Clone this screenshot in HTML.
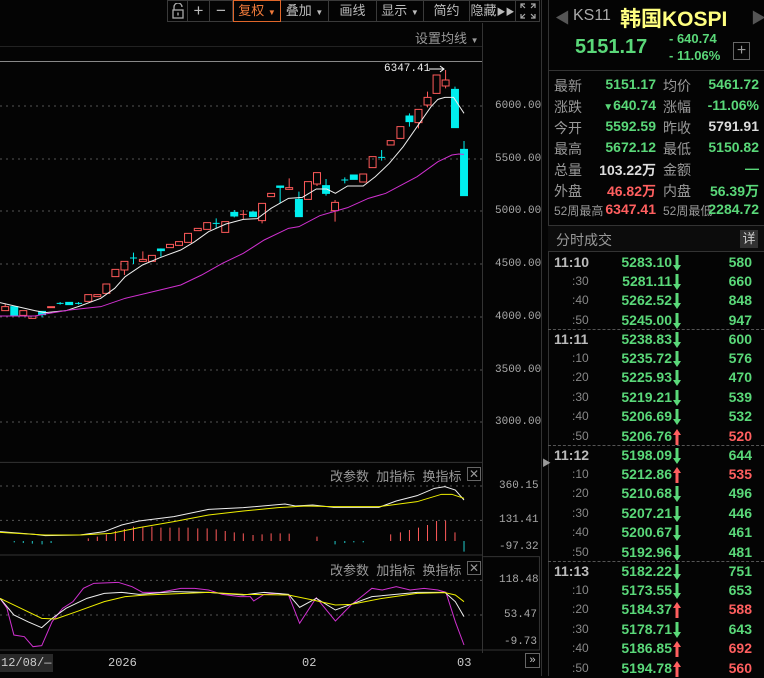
<!DOCTYPE html>
<html><head><meta charset="utf-8">
<style>
*{margin:0;padding:0;box-sizing:border-box}
body{width:764px;height:676px;background:#040404;overflow:hidden;position:relative;font-family:"Liberation Sans","Noto Sans CJK SC",sans-serif;color:#aaa}
.a{position:absolute;white-space:nowrap}
.tb{position:absolute;top:0;height:22px;border:1px solid #3a3a3a;border-left:none;color:#bbb;font-size:13px;line-height:20px;text-align:center}
.ax{position:absolute;font-family:"Liberation Mono",monospace;font-size:11px;color:#aaa;white-space:nowrap}
.g{color:#5ad879}.r{color:#ff5f5f}.w{color:#ddd}
.lbl{position:absolute;font-size:14px;color:#999;left:554px}
.val{position:absolute;font-size:14px;font-weight:bold;text-align:right;width:100px}
.row{position:absolute;left:548px;width:216px;height:19px;font-size:14px;font-weight:bold;line-height:19px}
.row .t{position:absolute;left:6px;color:#bbb}
.row .s{position:absolute;left:24px;color:#888;font-weight:normal;font-size:12px}
.row .p{position:absolute;right:92px}
.row .ar{position:absolute;left:125px;top:2px;width:8px;height:16px}
.row .v{position:absolute;right:12px}
.dash{position:absolute;left:548px;width:216px;border-top:1px dashed #555}
</style></head><body>
<svg width="0" height="0" style="position:absolute">
<defs>
<symbol id="dn" viewBox="0 0 8 16"><path d="M2.5 0H5.5V10H8L4 16L0 10H2.5Z" fill="#5ad879"/></symbol>
<symbol id="up" viewBox="0 0 8 16"><path d="M2.5 16H5.5V6H8L4 0L0 6H2.5Z" fill="#ff5f5f"/></symbol>
</defs></svg>

<!-- toolbar -->
<div class="tb" style="left:167px;width:21px;border-left:1px solid #3a3a3a">
<svg width="14" height="16" viewBox="0 0 14 16" style="margin-top:2px"><path d="M3 7V4a4 4 0 0 1 8 0" fill="none" stroke="#aaa" stroke-width="1.3"/><rect x="2" y="7" width="10" height="8" fill="none" stroke="#aaa" stroke-width="1.3"/><rect x="6.3" y="9.5" width="1.4" height="3" fill="#aaa"/></svg></div>
<div class="tb" style="left:188px;width:22px;font-size:17px">+</div>
<div class="tb" style="left:210px;width:23px;font-size:17px">−</div>
<div class="tb" style="left:233px;width:48px;border:1px solid #e0662a;color:#f07a3a">复权 <span style="font-size:8px">▼</span></div>
<div class="tb" style="left:281px;width:48px">叠加 <span style="font-size:8px">▼</span></div>
<div class="tb" style="left:329px;width:48px">画线</div>
<div class="tb" style="left:377px;width:47px">显示 <span style="font-size:8px">▼</span></div>
<div class="tb" style="left:424px;width:46px">简约</div>
<div class="tb" style="left:470px;width:46px">隐藏<span style="font-size:9px">▶▶</span></div>
<div class="tb" style="left:516px;width:24px">
<svg width="16" height="16" viewBox="0 0 16 16" style="margin-top:2px" fill="none" stroke="#aaa" stroke-width="1.2"><path d="M1 5V1h4M11 1h4v4M15 11v4h-4M5 15H1v-4M1 1l4 4M15 1l-4 4M15 15l-4-4M1 15l4-4"/></svg></div>

<div class="a" style="left:0;top:46px;width:482px;border-top:1px solid #222"></div>
<div class="a" style="left:0;top:61px;width:482px;border-top:1px solid #888"></div>
<div class="a" style="left:482px;top:23px;height:630px;border-left:1px solid #333"></div>
<div class="a" style="left:415px;top:28px;font-size:13px;color:#999">设置均线 <span style="font-size:8px">▼</span></div>
<div class="a" style="left:384px;top:63px;font-family:'Liberation Mono',monospace;font-size:11px;color:#eee">6347.41</div>
<svg class="a" style="left:428px;top:64px" width="18" height="10"><path d="M1 5H16M12 2l4 3-4 3" stroke="#fff" fill="none"/></svg>

<!-- main chart -->
<svg class="a" style="left:0;top:60px" width="545" height="400" viewBox="0 0 1568 1200" preserveAspectRatio="none">
<g stroke="#555" stroke-dasharray="2 4">
<path d="M0 138H1388M0 297H1388M0 453H1388M0 612H1388M0 771H1388M0 930H1388M0 1086H1388" vector-effect="non-scaling-stroke"/></g>
<g fill="none" stroke="#ff5a5a" stroke-width="1">
<rect x="5" y="740" width="20" height="12" vector-effect="non-scaling-stroke"/>
<rect x="57" y="752" width="20" height="14" vector-effect="non-scaling-stroke"/>
<rect x="83" y="768" width="20" height="7" vector-effect="non-scaling-stroke"/>
<rect x="137" y="740" width="20" height="3" vector-effect="non-scaling-stroke"/>
<rect x="244" y="704" width="20" height="20" vector-effect="non-scaling-stroke"/>
<rect x="270" y="704" width="20" height="6" vector-effect="non-scaling-stroke"/>
<rect x="296" y="672" width="20" height="28" vector-effect="non-scaling-stroke"/>
<rect x="322" y="628" width="20" height="22" vector-effect="non-scaling-stroke"/>
<rect x="348" y="604" width="20" height="26" vector-effect="non-scaling-stroke"/>
<rect x="401" y="598" width="20" height="6" vector-effect="non-scaling-stroke"/>
<rect x="427" y="586" width="20" height="18" vector-effect="non-scaling-stroke"/>
<rect x="479" y="553" width="20" height="10" vector-effect="non-scaling-stroke"/>
<rect x="505" y="545" width="20" height="11" vector-effect="non-scaling-stroke"/>
<rect x="531" y="520" width="20" height="27" vector-effect="non-scaling-stroke"/>
<rect x="559" y="505" width="20" height="7" vector-effect="non-scaling-stroke"/>
<rect x="586" y="488" width="20" height="20" vector-effect="non-scaling-stroke"/>
<rect x="638" y="485" width="20" height="32" vector-effect="non-scaling-stroke"/>
<rect x="744" y="430" width="20" height="52" vector-effect="non-scaling-stroke"/>
<rect x="770" y="400" width="20" height="10" vector-effect="non-scaling-stroke"/>
<rect x="822" y="383" width="20" height="5" vector-effect="non-scaling-stroke"/>
<rect x="876" y="365" width="20" height="53" vector-effect="non-scaling-stroke"/>
<rect x="902" y="338" width="20" height="34" vector-effect="non-scaling-stroke"/>
<rect x="954" y="427" width="20" height="25" vector-effect="non-scaling-stroke"/>
<rect x="1035" y="342" width="20" height="24" vector-effect="non-scaling-stroke"/>
<rect x="1062" y="290" width="20" height="33" vector-effect="non-scaling-stroke"/>
<rect x="1114" y="242" width="20" height="13" vector-effect="non-scaling-stroke"/>
<rect x="1142" y="200" width="20" height="35" vector-effect="non-scaling-stroke"/>
<rect x="1194" y="148" width="20" height="40" vector-effect="non-scaling-stroke"/>
<rect x="1220" y="112" width="20" height="23" vector-effect="non-scaling-stroke"/>
<rect x="1246" y="45" width="20" height="55" vector-effect="non-scaling-stroke"/>
<rect x="1272" y="60" width="20" height="18" vector-effect="non-scaling-stroke"/>
<path d="M15 730V740M358 630V645M411 574V598M700 450V478M690 463H710M754 482V490M832 355V383M912 372V378M964 420V427M964 452V485M1230 95V112M1230 135V142M1282 30V60M1282 78V85M1204 188V205" vector-effect="non-scaling-stroke"/>
</g>
<g fill="#00eeee" stroke="#00eeee">
<rect x="31" y="740" width="20" height="28" vector-effect="non-scaling-stroke"/>
<rect x="111" y="754" width="20" height="10" vector-effect="non-scaling-stroke"/>
<rect x="189" y="727" width="20" height="7" vector-effect="non-scaling-stroke"/>
<rect x="453" y="567" width="20" height="5" vector-effect="non-scaling-stroke"/>
<rect x="664" y="457" width="20" height="11" vector-effect="non-scaling-stroke"/>
<rect x="718" y="456" width="20" height="14" vector-effect="non-scaling-stroke"/>
<rect x="796" y="378" width="20" height="4" vector-effect="non-scaling-stroke"/>
<rect x="850" y="418" width="20" height="52" vector-effect="non-scaling-stroke"/>
<rect x="928" y="377" width="20" height="23" vector-effect="non-scaling-stroke"/>
<rect x="1008" y="345" width="20" height="13" vector-effect="non-scaling-stroke"/>
<rect x="1168" y="168" width="20" height="17" vector-effect="non-scaling-stroke"/>
<rect x="1299" y="88" width="20" height="115" vector-effect="non-scaling-stroke"/>
<rect x="1325" y="268" width="20" height="139" vector-effect="non-scaling-stroke"/>
<path fill="none" d="M121 764V772M163 730H183M173 726V734M216 730H236M226 726V734M374 594H394M384 578V612M463 565V590M612 490H632M622 475V505M674 450V472M806 382V430M860 395V418M938 357V377M938 400V407M982 360H1002M992 352V370M1088 292H1108M1098 270V302M1178 160V168M1178 185V200M1309 80V88M1335 243V268" vector-effect="non-scaling-stroke"/>
</g>
<polyline fill="none" stroke="#eee" vector-effect="non-scaling-stroke" points="0,728 100,752 130,758 190,752 230,738 290,715 330,685 360,650 410,615 460,593 520,570 560,545 600,515 650,492 700,478 740,476 780,445 830,415 870,412 910,387 940,387 965,400 1000,378 1045,378 1080,350 1120,310 1160,260 1200,200 1240,140 1260,118 1280,112 1305,112 1335,160"/>
<polyline fill="none" stroke="#d030d0" vector-effect="non-scaling-stroke" points="0,768 100,768 130,762 200,750 290,740 360,715 420,700 520,675 580,645 640,610 700,580 760,540 830,505 860,500 920,467 960,455 1000,443 1060,415 1110,400 1200,350 1260,305 1300,285 1320,282 1335,283"/>
</svg>
<div class="ax" style="left:495px;top:100px">6000.00</div>
<div class="ax" style="left:495px;top:153px">5500.00</div>
<div class="ax" style="left:495px;top:205px">5000.00</div>
<div class="ax" style="left:495px;top:258px">4500.00</div>
<div class="ax" style="left:495px;top:311px">4000.00</div>
<div class="ax" style="left:495px;top:364px">3500.00</div>
<div class="ax" style="left:495px;top:416px">3000.00</div>

<!-- lower panels -->
<svg class="a" style="left:0;top:455px" width="545" height="221" viewBox="0 0 1568 663" preserveAspectRatio="none">
<path d="M0 22H1388M0 300H1388M0 585H1388" stroke="#333" vector-effect="non-scaling-stroke"/>
<path d="M1390 305H1552V585H1390" stroke="#333" fill="none" vector-effect="non-scaling-stroke"/>
<path d="M0 93H1388M0 196H1388M0 376H1388M0 480H1388" stroke="#555" stroke-dasharray="2 4" vector-effect="non-scaling-stroke"/>
<path vector-effect="non-scaling-stroke" stroke="#ff5a5a" d="M254 258V250M280 258V245M306 258V238M332 258V228M358 258V222M384 258V215M411 258V215M437 258V215M463 258V218M489 258V218M515 258V218M541 258V218M569 258V220M596 258V220M622 258V223M648 258V228M674 258V232M700 258V235M728 258V240M754 258V238M780 258V235M806 258V235M832 258V236M912 258V245M1124 258V238M1152 258V232M1178 258V225M1204 258V218M1230 258V210M1256 258V198M1282 258V197M1309 258V232"/>
<path vector-effect="non-scaling-stroke" stroke="#2cc" d="M41 258V262M67 258V264M93 258V266M121 258V268M147 258V264M964 258V268M992 258V264M1018 258V262M1045 258V262M1335 258V290"/>
<polyline fill="none" stroke="#eee" vector-effect="non-scaling-stroke" points="0,230 100,238 130,242 230,240 300,230 350,210 400,198 500,185 600,163 700,158 820,147 850,153 900,150 960,157 1090,157 1140,138 1200,122 1250,100 1280,95 1310,105 1335,135"/>
<polyline fill="none" stroke="#ee0" vector-effect="non-scaling-stroke" points="0,232 130,240 230,240 320,235 400,218 500,200 600,180 700,168 800,158 880,153 960,155 1090,155 1200,140 1270,118 1300,118 1335,130"/>
<polyline fill="none" stroke="#d030d0" vector-effect="non-scaling-stroke" points="0,430 20,460 40,540 70,545 95,575 120,572 150,500 180,460 210,440 240,400 270,385 340,382 380,395 410,412 460,412 520,400 560,400 600,405 640,418 690,425 720,425 730,438 760,418 800,415 830,420 862,505 910,428 965,498 1010,450 1040,425 1070,400 1100,405 1140,395 1180,405 1220,400 1260,405 1283,412 1310,500 1335,570"/>
<polyline fill="none" stroke="#eee" vector-effect="non-scaling-stroke" points="0,430 40,480 80,500 120,518 150,490 190,460 250,430 300,415 350,412 400,418 500,410 600,412 700,420 760,412 830,418 862,457 910,430 965,465 1010,448 1070,425 1200,412 1280,412 1310,440 1335,485"/>
<polyline fill="none" stroke="#ee0" vector-effect="non-scaling-stroke" points="0,430 60,460 120,490 160,492 220,470 300,440 360,425 420,420 600,412 700,418 830,420 900,435 965,450 1010,448 1100,430 1200,415 1280,413 1310,420 1335,440"/>
</svg>
<div class="a" style="left:330px;top:466px;font-size:13px;color:#999">改参数&nbsp; 加指标&nbsp; 换指标</div>
<div class="a" style="left:467px;top:467px;width:14px;height:14px;border:1px solid #666;color:#999;font-size:12px;line-height:12px;text-align:center">✕</div>
<div class="a" style="left:330px;top:560px;font-size:13px;color:#999">改参数&nbsp; 加指标&nbsp; 换指标</div>
<div class="a" style="left:467px;top:561px;width:14px;height:14px;border:1px solid #666;color:#999;font-size:12px;line-height:12px;text-align:center">✕</div>
<div class="ax" style="left:499px;top:480px">360.15</div>
<div class="ax" style="left:499px;top:514px">131.41</div>
<div class="ax" style="left:499px;top:541px">-97.32</div>
<div class="ax" style="left:499px;top:574px">118.48</div>
<div class="ax" style="left:504px;top:609px">53.47</div>
<div class="ax" style="left:504px;top:636px">-9.73</div>
<div class="a" style="left:0;top:654px;width:53px;height:18px;background:#2a2a2a"></div>
<div class="ax" style="left:1px;top:656px;color:#ccc;font-size:12px">12/08/—</div>
<div class="ax" style="left:108px;top:656px;color:#ccc;font-size:12px">2026</div>
<div class="ax" style="left:302px;top:656px;color:#ccc;font-size:12px">02</div>
<div class="ax" style="left:457px;top:656px;color:#ccc;font-size:12px">03</div>
<div class="a" style="left:525px;top:653px;width:15px;height:15px;border:1px solid #666;color:#ccc;font-size:11px;line-height:13px;text-align:center">»</div>

<!-- separator -->
<div class="a" style="left:541px;top:0;height:676px;border-left:1px solid #333"></div>
<div class="a" style="left:548px;top:0;height:676px;border-left:1px solid #333"></div>
<div class="a" style="left:542px;top:456px;font-size:9px;color:#999">▶</div>

<!-- right header -->
<div class="a" style="left:555px;top:7px;font-size:15px;color:#555">◀</div>
<div class="a" style="left:573px;top:7px;font-size:16px;color:#aaa">KS11</div>
<div class="a" style="left:620px;top:3px;font-size:21px;font-weight:bold;color:#ffff80">韩国KOSPI</div>
<div class="a" style="left:751px;top:7px;font-size:15px;color:#555">▶</div>
<div class="a g" style="left:575px;top:36px;font-size:20px;font-weight:bold">5151.17</div>
<div class="a g" style="left:669px;top:31px;font-size:13px;font-weight:bold">- 640.74</div>
<div class="a g" style="left:669px;top:48px;font-size:13px;font-weight:bold">- 11.06%</div>
<div class="a" style="left:733px;top:42px;width:17px;height:18px;border:1px solid #666;color:#999;font-size:16px;line-height:15px;text-align:center">+</div>
<div class="a" style="left:548px;top:70px;width:216px;border-top:1px solid #333"></div>

<div class="lbl" style="top:76px">最新</div><div class="val g" style="left:556px;top:76px">5151.17</div>
<div class="lbl" style="left:663px;top:76px">均价</div><div class="val g" style="left:659px;top:76px">5461.72</div>
<div class="lbl" style="top:97px">涨跌</div><div class="val g" style="left:556px;top:97px"><span style="font-size:10px">▼</span>640.74</div>
<div class="lbl" style="left:663px;top:97px">涨幅</div><div class="val g" style="left:659px;top:97px">-11.06%</div>
<div class="lbl" style="top:118px">今开</div><div class="val g" style="left:556px;top:118px">5592.59</div>
<div class="lbl" style="left:663px;top:118px">昨收</div><div class="val w" style="left:659px;top:118px">5791.91</div>
<div class="lbl" style="top:139px">最高</div><div class="val g" style="left:556px;top:139px">5672.12</div>
<div class="lbl" style="left:663px;top:139px">最低</div><div class="val g" style="left:659px;top:139px">5150.82</div>
<div class="lbl" style="top:160px">总量</div><div class="val w" style="left:556px;top:160px">103.22万</div>
<div class="lbl" style="left:663px;top:160px">金额</div><div class="val g" style="left:659px;top:160px">—</div>
<div class="lbl" style="top:181px">外盘</div><div class="val r" style="left:556px;top:181px">46.82万</div>
<div class="lbl" style="left:663px;top:181px">内盘</div><div class="val g" style="left:659px;top:181px">56.39万</div>
<div class="lbl" style="top:202px;font-size:12px">52周最高</div><div class="val r" style="left:556px;top:201px">6347.41</div>
<div class="lbl" style="left:663px;top:202px;font-size:12px">52周最低</div><div class="val g" style="left:659px;top:201px">2284.72</div>

<div class="a" style="left:548px;top:225px;width:216px;height:27px;border-top:1px solid #333;border-bottom:1px solid #333;background:#0c0c0c"></div>
<div class="a" style="left:556px;top:230px;font-size:14px;color:#999">分时成交</div>
<div class="a" style="left:740px;top:230px;width:18px;height:18px;background:#333;color:#ccc;font-size:13px;line-height:18px;text-align:center">详</div>

<div class="row" style="top:253px"><span class="t">11:10</span><span class="p g">5283.10</span><svg class="ar"><use href="#dn"/></svg><span class="v g">580</span></div>
<div class="row" style="top:272px"><span class="s">:30</span><span class="p g">5281.11</span><svg class="ar"><use href="#dn"/></svg><span class="v g">660</span></div>
<div class="row" style="top:291px"><span class="s">:40</span><span class="p g">5262.52</span><svg class="ar"><use href="#dn"/></svg><span class="v g">848</span></div>
<div class="row" style="top:311px"><span class="s">:50</span><span class="p g">5245.00</span><svg class="ar"><use href="#dn"/></svg><span class="v g">947</span></div>
<div class="dash" style="top:329px"></div>
<div class="row" style="top:330px"><span class="t">11:11</span><span class="p g">5238.83</span><svg class="ar"><use href="#dn"/></svg><span class="v g">600</span></div>
<div class="row" style="top:349px"><span class="s">:10</span><span class="p g">5235.72</span><svg class="ar"><use href="#dn"/></svg><span class="v g">576</span></div>
<div class="row" style="top:368px"><span class="s">:20</span><span class="p g">5225.93</span><svg class="ar"><use href="#dn"/></svg><span class="v g">470</span></div>
<div class="row" style="top:388px"><span class="s">:30</span><span class="p g">5219.21</span><svg class="ar"><use href="#dn"/></svg><span class="v g">539</span></div>
<div class="row" style="top:407px"><span class="s">:40</span><span class="p g">5206.69</span><svg class="ar"><use href="#dn"/></svg><span class="v g">532</span></div>
<div class="row" style="top:427px"><span class="s">:50</span><span class="p g">5206.76</span><svg class="ar"><use href="#up"/></svg><span class="v r">520</span></div>
<div class="dash" style="top:445px"></div>
<div class="row" style="top:446px"><span class="t">11:12</span><span class="p g">5198.09</span><svg class="ar"><use href="#dn"/></svg><span class="v g">644</span></div>
<div class="row" style="top:465px"><span class="s">:10</span><span class="p g">5212.86</span><svg class="ar"><use href="#up"/></svg><span class="v r">535</span></div>
<div class="row" style="top:484px"><span class="s">:20</span><span class="p g">5210.68</span><svg class="ar"><use href="#dn"/></svg><span class="v g">496</span></div>
<div class="row" style="top:504px"><span class="s">:30</span><span class="p g">5207.21</span><svg class="ar"><use href="#dn"/></svg><span class="v g">446</span></div>
<div class="row" style="top:523px"><span class="s">:40</span><span class="p g">5200.67</span><svg class="ar"><use href="#dn"/></svg><span class="v g">461</span></div>
<div class="row" style="top:543px"><span class="s">:50</span><span class="p g">5192.96</span><svg class="ar"><use href="#dn"/></svg><span class="v g">481</span></div>
<div class="dash" style="top:561px"></div>
<div class="row" style="top:562px"><span class="t">11:13</span><span class="p g">5182.22</span><svg class="ar"><use href="#dn"/></svg><span class="v g">751</span></div>
<div class="row" style="top:581px"><span class="s">:10</span><span class="p g">5173.55</span><svg class="ar"><use href="#dn"/></svg><span class="v g">653</span></div>
<div class="row" style="top:600px"><span class="s">:20</span><span class="p g">5184.37</span><svg class="ar"><use href="#up"/></svg><span class="v r">588</span></div>
<div class="row" style="top:620px"><span class="s">:30</span><span class="p g">5178.71</span><svg class="ar"><use href="#dn"/></svg><span class="v g">643</span></div>
<div class="row" style="top:639px"><span class="s">:40</span><span class="p g">5186.85</span><svg class="ar"><use href="#up"/></svg><span class="v r">692</span></div>
<div class="row" style="top:659px"><span class="s">:50</span><span class="p g">5194.78</span><svg class="ar"><use href="#up"/></svg><span class="v r">560</span></div>
</body></html>
